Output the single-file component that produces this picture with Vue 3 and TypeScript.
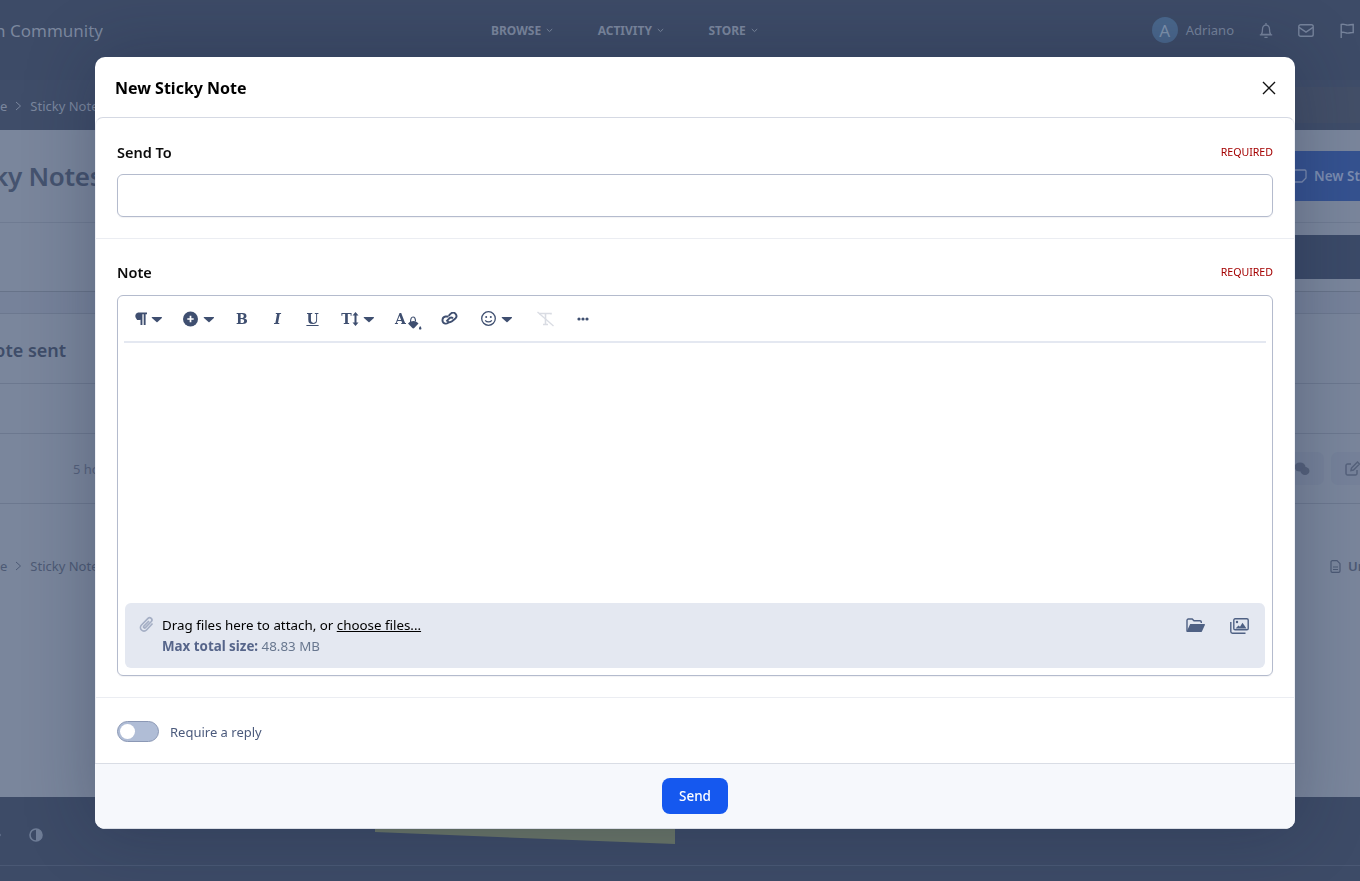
<script setup lang="ts">
const navItems: string[] = ['BROWSE', 'ACTIVITY', 'STORE']
</script>

<template>
  <div class="page">
    <header class="top">
      <div class="brand"><span>Invision Community</span></div>
      <nav class="nav">
        <span v-for="n in navItems" :key="n" class="nav-item">{{ n }}
          <svg width="7" height="5" viewBox="0 0 7 5"><path d="M.8 1l2.7 2.6L6.2 1" fill="none" stroke="currentColor" stroke-width="1"/></svg>
        </span>
      </nav>
      <div class="user">
        <span class="avatar">A</span>
        <span class="uname">Adriano</span>
        <svg width="16" height="17" viewBox="0 0 16 17" fill="none" stroke="currentColor" stroke-width="1.3"><path d="M8 1v1.2M3.3 12.5c1-1.4 1.2-3 1.2-5.3C4.500 5 6 3 8 3s3.500 2 3.500 4.200c0 2.300.2 3.900 1.200 5.300zM1.800 12.800h12.400M6.400 15.300h3.200"/></svg>
        <svg class="mail" width="16" height="13" viewBox="0 0 16 13" fill="none" stroke="currentColor" stroke-width="1.4"><rect x=".8" y=".8" width="14.400" height="11.400" rx="1.800"/><path d="M1 3.300l7 4.800 7-4.800"/></svg>
        <svg class="flag" width="15" height="15" viewBox="0 0 15 15" fill="none" stroke="currentColor" stroke-width="1.400"><path d="M1.200 15V1.500c3-1 4 .6 6.500.6s3.500-.8 5.500-.6v8c-2-.3-3 .6-5.500.6s-3.500-1.600-6.500-.6"/></svg>
      </div>
    </header>
    <div class="crumb-bar">
      <div class="crumbs"><span>e</span>
        <svg width="7" height="10" viewBox="0 0 7 10"><path d="M1 1l4.500 4L1 9" fill="none" stroke="currentColor"/></svg>
        <span>Sticky Notes</span></div>
      <div class="search"></div>
    </div>
    <main class="content">
      <section class="title-row">
        <h1>Sticky Notes</h1>
        <div class="new-btn">
          <svg width="14" height="14" viewBox="0 0 14 14" fill="none" stroke="currentColor" stroke-width="1.300"><path d="M13 9V2.200A1.200 1.200 0 0 0 11.800 1H2.200A1.200 1.200 0 0 0 1 2.200v9.600A1.200 1.200 0 0 0 2.200 13H9z"/></svg>
          <span>New Sticky Note</span>
        </div>
      </section>
      <section class="band-a"><div class="dark-bar"></div></section>
      <section class="band-b"></section>
      <section class="sent-row"><h2>Note sent</h2></section>
      <section class="head-row"></section>
      <section class="item-row">
        <span class="ago">5 hours ago</span>
        <div class="actions">
          <span class="act"><svg width="16" height="14" viewBox="0 0 16 14" fill="currentColor"><ellipse cx="6" cy="5" rx="5.500" ry="4.500"/><ellipse cx="11" cy="9" rx="4.500" ry="4"/></svg></span>
          <span class="act"><svg width="15" height="15" viewBox="0 0 15 15" fill="none" stroke="currentColor" stroke-width="1.500"><path d="M12 9v3.500a1.500 1.500 0 0 1-1.500 1.500h-8A1.500 1.500 0 0 1 1 12.500v-8A1.500 1.500 0 0 1 2.500 3H6M6 9.500l.5-2.500L12.500 1l2 2-6 6z"/></svg></span>
        </div>
      </section>
      <section class="crumb-bottom">
        <div class="crumbs"><span>e</span>
          <svg width="7" height="10" viewBox="0 0 7 10"><path d="M1 1l4.500 4L1 9" fill="none" stroke="currentColor"/></svg>
          <span>Sticky Notes</span></div>
        <div class="doc">
          <svg width="11" height="13" viewBox="0 0 11 13" fill="none" stroke="currentColor" stroke-width="1.200"><path d="M1 2a1.300 1.300 0 0 1 1.300-1.300H7L10 3.700v7.300a1.300 1.300 0 0 1-1.300 1.300H2.300A1.300 1.300 0 0 1 1 11zM3 7h5M3 9.500h5"/></svg>
          <span>Unread</span>
        </div>
      </section>
    </main>
    <footer class="foot">
      <div class="foot-main">
        <svg class="moon" width="8" height="14" viewBox="0 0 8 14"><path d="M0 2l3 5-3 5" fill="none" stroke="currentColor" stroke-width="1.500"/></svg>
        <svg class="contrast" width="14" height="14" viewBox="0 0 14 14"><circle cx="7" cy="7" r="6" fill="none" stroke="currentColor" stroke-width="1.600"/><path d="M7 1a6 6 0 0 1 0 12z" fill="currentColor"/></svg>
        <div class="sticky-peek"></div>
      </div>
    </footer>
  </div>

  <div class="modal" role="dialog" aria-label="New Sticky Note">
    <div class="m-head">
      <h3>New Sticky Note</h3>
      <svg class="close" width="14" height="14" viewBox="0 0 14 14"><path d="M1 1l12 12M13 1L1 13" stroke="#111" stroke-width="1.400" fill="none"/></svg>
    </div>
    <div class="m-body">
      <div class="field first">
        <div class="f-label"><label>Send To</label><span class="req">REQUIRED</span></div>
        <div class="input"></div>
      </div>
      <div class="field second">
        <div class="f-label"><label>Note</label><span class="req">REQUIRED</span></div>
        <div class="editor">
          <div class="toolbar">
            <span class="tb w45 shift-l">
              <svg width="28" height="16" viewBox="0 0 28 16"><path d="M3 1.500h9v1.800h-1.400V14H8.700V3.300H7.400V14H5.500V8.800A3.700 3.700 0 0 1 3 1.500z" fill="currentColor"/><path d="M17 6h9.500a.6.6 0 0 1 .4 1l-4.400 4a.8.8 0 0 1-1 0L17 7c-.4-.4-.3-1 0-1z" fill="currentColor"/></svg>
            </span>
            <span class="tb w45 pl2">
              <svg width="31" height="16" viewBox="0 0 31 16"><circle cx="7.500" cy="8" r="7.500" fill="currentColor"/><path d="M7.500 4.800v6.400M4.300 8h6.400" stroke="#fff" stroke-width="1.700"/><path d="M21 6h9.500a.6.6 0 0 1 .4 1l-4.400 4a.8.8 0 0 1-1 0L21 7c-.4-.4-.3-1 0-1z" fill="currentColor"/></svg>
            </span>
            <span class="tb w40 glyph pl4">B</span>
            <span class="tb w35 glyph it">I</span>
            <span class="tb w35 glyph un">U</span>
            <span class="tb w55 glyph pl8">T<svg width="30" height="16" viewBox="0 0 30 16"><path d="M3.500 1L6.500 4.500H4.500v7h2L3.500 15 .5 11.500h2v-7h-2z" fill="currentColor"/><path d="M12 6h9.500a.6.6 0 0 1 .4 1l-4.400 4a.8.8 0 0 1-1 0L12 7c-.4-.4-.3-1 0-1z" fill="currentColor"/></svg></span>
            <span class="tb w45 glyph aa">A<svg class="bucket" width="15" height="15" viewBox="0 0 15 15"><path d="M1 7.500c2-2 3.500-2.600 5.500-2.600s3.500.8 5 2.600l-4 4.300a1.700 1.700 0 0 1-2.400 0z" fill="currentColor"/><path d="M3.500 6.500C3.500 4 3.800 1 6 1s2.500 2.500 2.500 4.500" fill="none" stroke="currentColor" stroke-width="1.200"/><path d="M13.200 10c.7 1 1.200 1.800 1.200 2.400a1.200 1.200 0 0 1-2.400 0c0-.6.500-1.400 1.200-2.400z" fill="currentColor"/></svg></span>
            <span class="tb w40">
              <svg width="18" height="14" viewBox="0 0 18 14" fill="none" stroke="currentColor" stroke-width="1.900"><path d="M7.500 4.500h-3a3.600 3.600 0 0 0-1 6.800c1.800.7 3.500 0 4.500-1.300"/><path d="M6.500 9.500c1.200.8 3.200.8 4.500-.2l3.300-2.800a3.300 3.300 0 0 0-4.300-5C8.500 2.300 8 3.500 8 4.300"/><path d="M5.500 9.500l2.300-2.600c1-1.200 2.900-1.500 4.200-.6"/></svg>
            </span>
            <span class="tb w55 smile">
              <svg width="31" height="16" viewBox="0 0 31 16"><circle cx="7.500" cy="7.500" r="6.800" fill="none" stroke="currentColor" stroke-width="1.300"/><circle cx="5.200" cy="6" r="1" fill="currentColor"/><circle cx="9.800" cy="6" r="1" fill="currentColor"/><path d="M4.200 9.300c1.600 2.200 5 2.200 6.600 0" fill="none" stroke="currentColor" stroke-width="1.200"/><path d="M21 6h9.500a.6.6 0 0 1 .4 1l-4.400 4a.8.8 0 0 1-1 0L21 7c-.4-.4-.3-1 0-1z" fill="currentColor"/></svg>
            </span>
            <span class="tb w40">
              <svg width="19" height="16" viewBox="0 0 19 16" fill="none" stroke="#d9dce3" stroke-width="1.600"><path d="M4 3.500v-1h11v1M9.500 2.500v11M7 13.500h5"/><path d="M1.500 1l16 14" stroke-width="1.300"/></svg>
            </span>
            <span class="tb w35">
              <svg width="12" height="4" viewBox="0 0 12 4" fill="currentColor"><circle cx="2" cy="2" r="1.600"/><circle cx="6" cy="2" r="1.600"/><circle cx="10" cy="2" r="1.600"/></svg>
            </span>
          </div>
          <div class="e-area"></div>
          <div class="attach">
            <svg class="clip" width="15" height="17" viewBox="0 0 15 17" fill="none" stroke="currentColor" stroke-width="1.700"><path d="M13.500 7.500L7.500 14a3.500 3.500 0 0 1-5-5L9 2.300a2.300 2.300 0 0 1 3.300 3.200L6.400 11.600a1 1 0 0 1-1.500-1.400L10 5"/></svg>
            <div class="a-text">
              <div class="a-drag">Drag files here to attach, or <a>choose files...</a></div>
              <div class="a-max"><b>Max total size:</b> 48.83 MB</div>
            </div>
            <div class="a-icons">
              <svg width="19" height="15" viewBox="0 0 19 15"><path d="M1 13.500V2.300A1.300 1.300 0 0 1 2.300 1h3.900l1.800 1.800h6a1.300 1.300 0 0 1 1.300 1.300V5" fill="none" stroke="currentColor" stroke-width="1.400"/><path d="M4.200 6h14a.7.7 0 0 1 .7 1l-3 6.500a1.200 1.200 0 0 1-1 .5H1.200a.5.500 0 0 1-.4-.8z" fill="currentColor"/></svg>
              <svg width="19" height="16" viewBox="0 0 19 16"><rect x="3.800" y=".8" width="14.400" height="11" rx="1.300" fill="none" stroke="currentColor" stroke-width="1.400"/><path d="M.8 4v9.500A1.700 1.700 0 0 0 2.500 15.200h13" fill="none" stroke="currentColor" stroke-width="1.400"/><path d="M5.500 10.500l3-3 1.500 1.300 2.500-4 4 5.700z" fill="currentColor"/><circle cx="7" cy="4" r="1.200" fill="currentColor"/></svg>
            </div>
          </div>
        </div>
      </div>
      <div class="toggle-row">
        <span class="toggle"><span class="knob"></span></span>
        <span class="t-label">Require a reply</span>
      </div>
    </div>
    <div class="m-foot"><button class="send" type="button">Send</button></div>
  </div>
</template>

<style>
html, body { margin: 0; overflow: hidden; height: 100%; }
</style>

<style scoped>
.page {
  height: 881px;
  width: 1360px;
  overflow: hidden;
  display: flex;
  flex-direction: column;
  background: #7a869c;
  font-family: "Noto Sans", "Open Sans", sans-serif;
  color: #4a5874;
}
.top {
  height: 80px;
  box-sizing: border-box;
  padding-bottom: 20px;
  background: #3d4b67;
  display: flex;
  align-items: center;
  color: #76839b;
  flex: none;
}
.brand {
  width: 103px;
  display: flex;
  justify-content: flex-end;
  overflow: hidden;
  white-space: nowrap;
  font-size: 17px;
  color: #7b879e;
  flex: none;
}
.brand span { flex: none; }
.nav { margin-left: 388px; display: flex; gap: 44.5px; }
.nav-item { font-size: 12px; font-weight: 700; display: flex; align-items: center; gap: 5px; color: #7b879e; }
.user { margin-left: auto; margin-right: 5px; display: flex; align-items: center; }
.avatar {
  width: 26px; height: 26px; border-radius: 50%;
  background: #4a678c; color: #7e93ad;
  display: flex; align-items: center; justify-content: center;
  font-size: 17px;
}
.uname { margin-left: 8px; margin-right: 24px; font-size: 13px; }
.mail { margin-left: 24px; }
.flag { margin-left: 26px; }
.crumb-bar {
  height: 50px;
  flex: none;
  background: #3f4d69;
  display: flex;
  align-items: center;
  justify-content: space-between;
  color: #7b879e;
  padding-top: 1px;
  box-sizing: border-box;
}
.crumbs { display: flex; align-items: center; gap: 8px; font-size: 13px; width: 97px; overflow: hidden; white-space: nowrap; flex: none; }
.crumbs span { flex: none; }
.crumbs svg { flex: none; }
.search { width: 65px; height: 36px; background: #434f68; margin-top: -1px; }
.content { flex: 1; display: flex; flex-direction: column; }
.title-row {
  height: 93px;
  flex: none;
  box-sizing: border-box;
  border-bottom: 1px solid #6f7b92;
  display: flex;
  align-items: center;
  justify-content: space-between;
}
h1 { margin: 0 0 0 -51px; font-size: 26px; letter-spacing: -.3px; font-weight: 600; color: #45536f; white-space: nowrap; }
.new-btn {
  width: 110px; margin-right: -30px; margin-bottom: 1px; height: 50px; background: #355290; color: #7b8cb0;
  display: flex; align-items: center; gap: 7px;
  box-sizing: border-box; padding-left: 13px;
  font-size: 13.5px; font-weight: 600; white-space: nowrap; overflow: hidden; flex: none;
}
.new-btn svg, .new-btn span { flex: none; }
.band-a {
  height: 69px; flex: none; box-sizing: border-box; border-bottom: 1px solid #677389;
  display: flex; flex-direction: column; align-items: flex-end; padding-top: 12px;
}
.dark-bar { width: 65px; height: 44px; background: #3b4a68; }
.band-b { height: 22px; flex: none; box-sizing: border-box; border-bottom: 1px solid #6c788f; background: #76829a; }
.sent-row {
  height: 70px; flex: none; box-sizing: border-box; border-bottom: 1px solid #6c788f;
  display: flex; align-items: center; padding-top: 3px;
}
h2 { margin: 0 0 0 -20px; font-size: 18px; font-weight: 600; color: #3f4d69; white-space: nowrap; }
.head-row { height: 50px; flex: none; box-sizing: border-box; border-bottom: 1px solid #6c788f; }
.item-row {
  height: 70px; flex: none; box-sizing: border-box; border-bottom: 1px solid #6c788f;
  display: flex; align-items: center; justify-content: space-between;
}
.ago { margin-left: 73px; font-size: 13px; color: #56627c; white-space: nowrap; }
.actions { display: flex; gap: 7px; flex: none; margin-right: -20px; }
.act {
  width: 49px; height: 33px; border-radius: 7px; background: #76829a; color: #56627c;
  display: flex; align-items: center; justify-content: flex-end; padding-right: 14px; box-sizing: border-box; flex: none;
}
.act + .act { justify-content: flex-start; padding: 0 0 0 14px; }
.crumb-bottom {
  height: 124px; flex: none; display: flex; align-items: center; justify-content: space-between; color: #4d5a75;
}
.doc { display: flex; align-items: center; gap: 7px; font-size: 13px; font-weight: 600; width: 30px; overflow: hidden; white-space: nowrap; flex: none; }
.doc svg, .doc span { flex: none; }
.foot { height: 84px; flex: none; background: #3d4b67; box-sizing: border-box; padding-bottom: 16px; color: #6f7d97; }
.foot-main { position: relative; height: 68px; border-bottom: 1px solid #4a5874; display: flex; align-items: center; }
.moon { position: absolute; left: -3px; top: 31px; }
.contrast { position: absolute; left: 29px; top: 31px; }
.sticky-peek {
  position: absolute; left: 375px; top: 20px; width: 300px; height: 27px;
  background: #6a7668;
  clip-path: polygon(0 0, 100% 0, 100% 100%, 0 56%);
}
.modal {
  position: fixed;
  left: 95px; top: 57px;
  width: 1200px;
  height: 772px;
  display: flex;
  flex-direction: column;
  background: #fff;
  border-radius: 10px;
  box-shadow: 0 0 70px rgba(20, 30, 55, .3);
  font-family: "Noto Sans", "Open Sans", sans-serif;
  overflow: hidden;
}
.m-head {
  height: 60px; flex: none; display: flex; align-items: center; justify-content: space-between;
  padding: 1px 19px 0 20px; box-sizing: border-box;
}
h3 { margin: 0; font-size: 16px; font-weight: 700; color: #000; }
.m-body {
  flex: 1;
  border-top: 1px solid #d5d9e3;
  border-radius: 8px 8px 0 0;
  border-left: 1px solid #eef0f5;
  border-right: 1px solid #eef0f5;
  display: flex; flex-direction: column;
}
.field { padding: 24px 21px 21px; border-bottom: 1px solid #ebedf2; }
.second { padding-top: 23px; }
.f-label { display: flex; justify-content: space-between; align-items: center; height: 20px; margin-bottom: 12px; }
.second .f-label { margin-bottom: 13px; }
label { font-size: 14.5px; font-weight: 600; color: #0c0c0c; }
.req { font-size: 10.6px; color: #a40000; }
.input { height: 43px; box-sizing: border-box; border: 1px solid #b4bbcd; border-radius: 6px; box-shadow: 0 1px 1px rgba(30, 40, 70, .06); }
.editor {
  height: 381px; box-sizing: border-box; border: 1px solid #b4bbcd; border-radius: 6px;
  display: flex; flex-direction: column; box-shadow: 0 1px 1px rgba(30, 40, 70, .06);
}
.toolbar {
  height: 47px; flex: none; box-sizing: border-box; margin: 0 6px; padding-left: 6px;
  border-bottom: 2px solid #e4e8f1; display: flex; align-items: center; color: #3f4f70;
}
.tb { display: flex; align-items: center; justify-content: center; height: 24px; flex: none; box-sizing: border-box; }
.shift-l { padding-right: 8px; }
.pl2 { padding-left: 2px; }
.pl4 { padding-left: 4px; }
.pl8 { padding-left: 8px; }
.smile { padding-right: 2px; }
.w35 { width: 35px; }
.w40 { width: 40px; }
.w45 { width: 45px; }
.w55 { width: 55px; }
.glyph { font-family: "DejaVu Serif", serif; font-size: 14px; font-weight: 700; }
.it { font-style: italic; }
.un { text-decoration: underline; }
.aa { position: relative; padding-right: 14px; }
.bucket { position: absolute; left: 22px; top: 9px; }
.e-area { flex: 1; }
.attach {
  height: 65px; flex: none; margin: 0 7px 7px; background: #e4e8f1; border-radius: 6px;
  display: flex; align-items: center; padding: 0 16px 0 14px; box-sizing: border-box;
}
.clip { color: #a5afc5; margin-right: 8px; align-self: flex-start; margin-top: 13px; flex: none; }
.a-text { display: flex; flex-direction: column; gap: 1px; font-size: 13.35px; line-height: 20px; }
.a-drag { color: #000; }
.a-drag a { text-decoration: underline; }
.a-max { color: #68778f; }
.a-max b { color: #56658a; font-weight: 700; }
.a-icons { margin-left: auto; display: flex; gap: 25px; color: #4f6184; align-self: flex-start; margin-top: 15px; }
.toggle-row { flex: 1; display: flex; align-items: center; padding-left: 21px; padding-top: 1px; }
.toggle {
  width: 42px; height: 21px; box-sizing: border-box; border-radius: 11px; background: #b0bdd6;
  border: 1px solid #8b98b5; display: flex; align-items: center; padding-left: 2px;
}
.knob { width: 15px; height: 15px; border-radius: 50%; background: #fff; }
.t-label { margin-left: 11px; margin-top: 2px; font-size: 13px; color: #4b5a7c; }
.m-foot {
  height: 66px; flex: none; box-sizing: border-box; background: #f6f8fc; border-top: 1px solid #d9dde5; border-bottom: 1px solid #d9dde5;
  display: flex; justify-content: center; padding-top: 14px;
}
.send {
  width: 66px; height: 36px; border: 0; border-radius: 8px; background: #1558ef; color: #fff;
  font-family: "Noto Sans", "Open Sans", sans-serif; font-size: 13.5px; font-weight: 500;
}
</style>
